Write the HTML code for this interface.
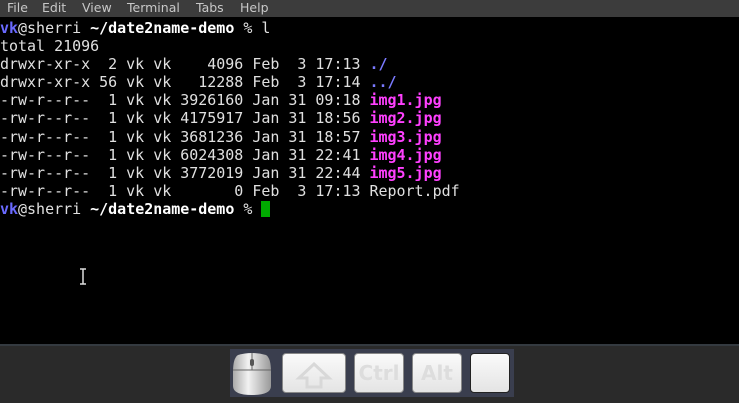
<!DOCTYPE html>
<html><head><style>
body{margin:0;width:739px;height:401px;background:#000;overflow:hidden;position:relative;font-family:"DejaVu Sans Mono","Liberation Mono",monospace;}
#menu{position:absolute;left:0;top:0;width:739px;height:17px;background:#3c3c3c;color:#c8c8c8;font-family:"DejaVu Sans","Liberation Sans",sans-serif;font-size:12.5px;line-height:15px;}
#menu span{position:absolute;top:0;}
#term{position:absolute;left:0;top:19px;color:#e0e0e0;font-size:14.97px;line-height:18.1px;white-space:pre;}
.u{color:#6a6aff;font-weight:bold}.b{font-weight:bold;color:#fff}.d{color:#7a7aff;font-weight:bold}.m{color:#ff40ff;font-weight:bold}
.cur{display:inline-block;width:9px;height:16px;background:#0a0;vertical-align:-3px}
#panel{position:absolute;left:0;top:344px;width:739px;height:57px;background:#2a2a2a;border-top:2px solid #343a40;}
#kb{position:absolute;left:230px;top:349px;width:284px;height:48px;background:#3a3e4e;}
.k{position:absolute;top:4px;height:38px;background:linear-gradient(#fafafa,#e4e4e4);border:1px solid #888;border-radius:4px;color:#ddd;font-family:"DejaVu Sans",sans-serif;font-weight:bold;font-size:20px;text-align:center;line-height:38px;}
</style></head><body>
<div id="menu"><span style="left:7px">File</span><span style="left:42px">Edit</span><span style="left:82px">View</span><span style="left:127px">Terminal</span><span style="left:196px">Tabs</span><span style="left:240px">Help</span></div>
<div id="term"><span class="u">vk</span>@sherri <span class="b">~/date2name-demo</span> % l
total 21096
drwxr-xr-x  2 vk vk    4096 Feb  3 17:13 <span class="d">./</span>
drwxr-xr-x 56 vk vk   12288 Feb  3 17:14 <span class="d">../</span>
-rw-r--r--  1 vk vk 3926160 Jan 31 09:18 <span class="m">img1.jpg</span>
-rw-r--r--  1 vk vk 4175917 Jan 31 18:56 <span class="m">img2.jpg</span>
-rw-r--r--  1 vk vk 3681236 Jan 31 18:57 <span class="m">img3.jpg</span>
-rw-r--r--  1 vk vk 6024308 Jan 31 22:41 <span class="m">img4.jpg</span>
-rw-r--r--  1 vk vk 3772019 Jan 31 22:44 <span class="m">img5.jpg</span>
-rw-r--r--  1 vk vk       0 Feb  3 17:13 Report.pdf
<span class="u">vk</span>@sherri <span class="b">~/date2name-demo</span> % <span class="cur"></span></div>
<svg style="position:absolute;left:79px;top:268px" width="8" height="17"><path d="M1 1h6M4 1v15M1 16h6" stroke="#ddd" stroke-width="1.5" fill="none"/></svg>
<div id="panel"></div>
<div id="kb">
<svg style="position:absolute;left:2px;top:3px" width="40" height="44" viewBox="0 0 40 44"><defs><linearGradient id="g" x1="0" x2="1"><stop offset="0" stop-color="#aaa"/><stop offset=".4" stop-color="#f2f2f2"/><stop offset="1" stop-color="#999"/></linearGradient></defs><path d="M6 3Q20 -1 34 3Q39 6 39 20V34Q39 43 20 43Q1 43 1 34V20Q1 6 6 3Z" fill="url(#g)"/><path d="M1 18H39M20 1V18" stroke="#666" stroke-width="1"/><rect x="18" y="7" width="4" height="7" rx="2" fill="#555"/></svg>
<div class="k" style="left:52px;width:62px;"><svg width="40" height="30" viewBox="0 0 40 30" style="vertical-align:middle"><path d="M20 4L35 18H27V27H13V18H5Z" fill="none" stroke="#d8d8d8" stroke-width="3"/></svg></div>
<div class="k" style="left:124px;width:48px;">Ctrl</div>
<div class="k" style="left:182px;width:48px;">Alt</div>
<div class="k" style="left:240px;width:38px;border-color:#222;"></div>
</div>
</body></html>
